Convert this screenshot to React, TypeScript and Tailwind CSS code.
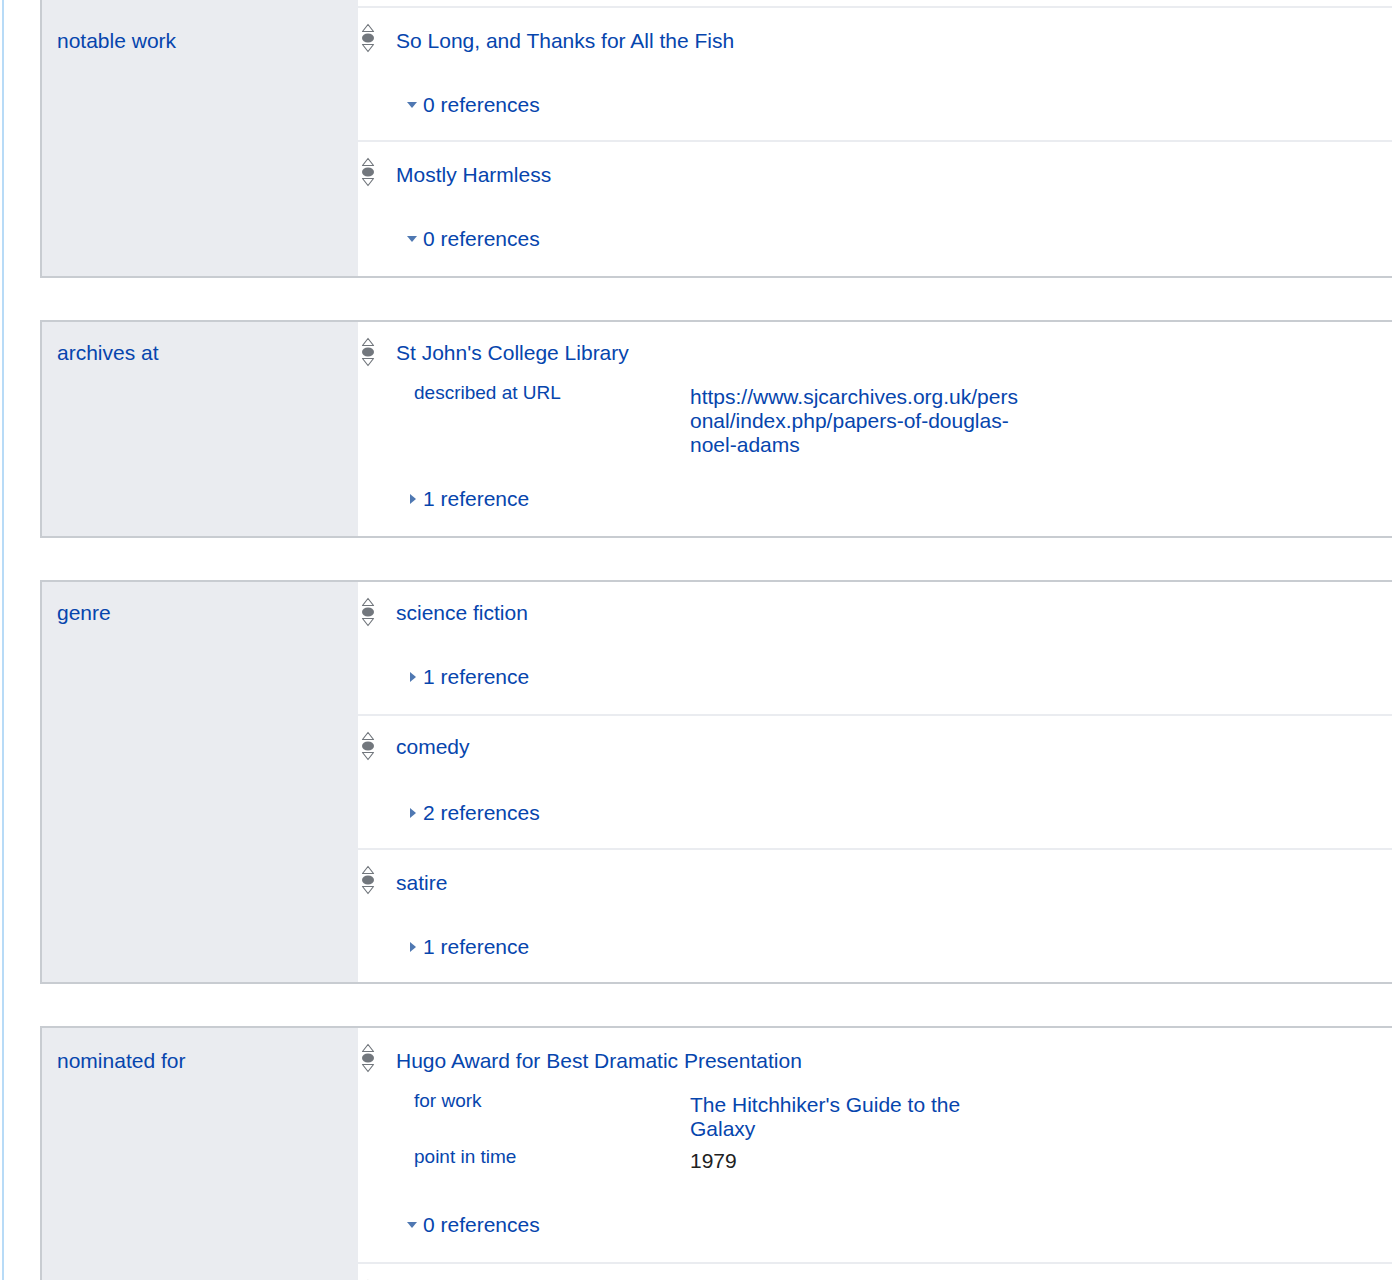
import React from "react";

type Qual = { label: string; value: string; plain?: boolean };

type StmtProps = {
  value?: string;
  quals?: Qual[];
  refs?: string;
  open?: boolean;
  pt?: string;
  pb?: string;
  qualMt?: string;
  refsMt?: string;
  first?: boolean;
};

function RankIcon() {
  return (
    <svg width="14" height="32" viewBox="0 0 14 32" className="block shrink-0">
      <path d="M7 2.5 L12.5 9.5 L1.5 9.5 Z" fill="none" stroke="#72777d" strokeWidth="1.2" strokeLinejoin="round" />
      <ellipse cx="7" cy="16" rx="6" ry="4.5" fill="#72777d" />
      <path d="M1.5 22.5 L12.5 22.5 L7 29.5 Z" fill="none" stroke="#72777d" strokeWidth="1.2" strokeLinejoin="round" />
    </svg>
  );
}

function Toggle({ open }: { open: boolean }) {
  if (open) {
    return (
      <svg width="10" height="6" viewBox="0 0 10 6" className="block">
        <path d="M0 0 L10 0 L5 6 Z" fill="#4f78b2" />
      </svg>
    );
  }
  return (
    <svg width="6" height="10" viewBox="0 0 6 10" className="block ml-[3px]">
      <path d="M0 0 L6 5 L0 10 Z" fill="#4f78b2" />
    </svg>
  );
}

function Statement({
  value,
  quals,
  refs,
  open = false,
  pt = "pt-[16px]",
  pb = "pb-[22px]",
  qualMt = "mt-[17px]",
  refsMt = "mt-[34px]",
  first,
}: StmtProps) {
  return (
    <div className={`flex items-start ${first ? "" : "border-t-2 border-[#eaecf0]"} ${pb}`}>
      <div className="w-[38px] shrink-0 pl-[3px] pt-[14px]">
        <RankIcon />
      </div>
      <div className={`flex-1 ${pt}`}>
        {value && <div className="text-[21px] leading-[30px] text-[#0645ad]">{value}</div>}
        {quals && (
          <div className={`${qualMt} ml-[18px] flex flex-col gap-[8px]`}>
            {quals.map((q) => (
              <div key={q.label} className="flex items-start">
                <div className="w-[276px] shrink-0 text-[19px] leading-[16px] text-[#0645ad]">{q.label}</div>
                <div
                  className={`w-[334px] text-[21px] leading-[24px] break-words ${
                    q.plain ? "text-[#202122]" : "text-[#0645ad]"
                  }`}
                >
                  {q.value}
                </div>
              </div>
            ))}
          </div>
        )}
        {refs && (
          <div className={`${refsMt} ml-[11px] flex items-center h-[30px]`}>
            <div className="w-[16px] shrink-0 flex items-center">
              <Toggle open={open} />
            </div>
            <span className="text-[21px] leading-[30px] text-[#0645ad]">{refs}</span>
          </div>
        )}
      </div>
    </div>
  );
}

function Group({
  label,
  labelPt = "pt-[16px]",
  className = "",
  children,
}: {
  label: string;
  labelPt?: string;
  className?: string;
  children: React.ReactNode;
}) {
  return (
    <div className={`flex shrink-0 w-[1360px] border-2 border-[#c8ccd1] ${className}`}>
      <div className={`w-[316px] shrink-0 bg-[#eaecf0] pl-[15px] ${labelPt}`}>
        <div className="text-[21px] leading-[30px] text-[#0645ad]">{label}</div>
      </div>
      <div className="flex-1 bg-white">{children}</div>
    </div>
  );
}

export default function App() {
  return (
    <div className="w-[1392px] h-[1280px] overflow-hidden bg-white font-['Liberation_Sans',Arial,sans-serif] pl-[2px]">
      <div className="h-full flex flex-col border-l-2 border-[#b8dbf7] pl-[36px]">
        <Group label="notable work" labelPt="pt-[54px]" className="mt-[-30px]">
          <div className="h-[34px]" />
          <Statement
            value="So Long, and Thanks for All the Fish"
            refs="0 references"
            open
            pt="pt-[18px]"
            pb="pb-[20px]"
          />
          <Statement value="Mostly Harmless" refs="0 references" open pt="pt-[18px]" pb="pb-[22px]" />
        </Group>

        <Group label="archives at" className="mt-[42px]">
          <Statement
            first
            value="St John's College Library"
            quals={[
              {
                label: "described at URL",
                value: "https://www.sjcarchives.org.uk/personal/index.php/papers-of-douglas-noel-adams",
              },
            ]}
            refs="1 reference"
            refsMt="mt-[27px]"
          />
        </Group>

        <Group label="genre" className="mt-[42px]">
          <Statement first value="science fiction" refs="1 reference" />
          <Statement value="comedy" refs="2 references" refsMt="mt-[36px]" pb="pb-[20px]" />
          <Statement value="satire" refs="1 reference" pt="pt-[18px]" pb="pb-[20px]" />
        </Group>

        <Group label="nominated for" labelPt="pt-[18px]" className="mt-[42px]">
          <Statement
            first
            pt="pt-[18px]"
            value="Hugo Award for Best Dramatic Presentation"
            quals={[
              { label: "for work", value: "The Hitchhiker's Guide to the Galaxy" },
              { label: "point in time", value: "1979", plain: true },
            ]}
            refs="0 references"
            open
            refsMt="mt-[37px]"
          />
          <Statement pb="pb-[40px]" />
        </Group>
      </div>
    </div>
  );
}
